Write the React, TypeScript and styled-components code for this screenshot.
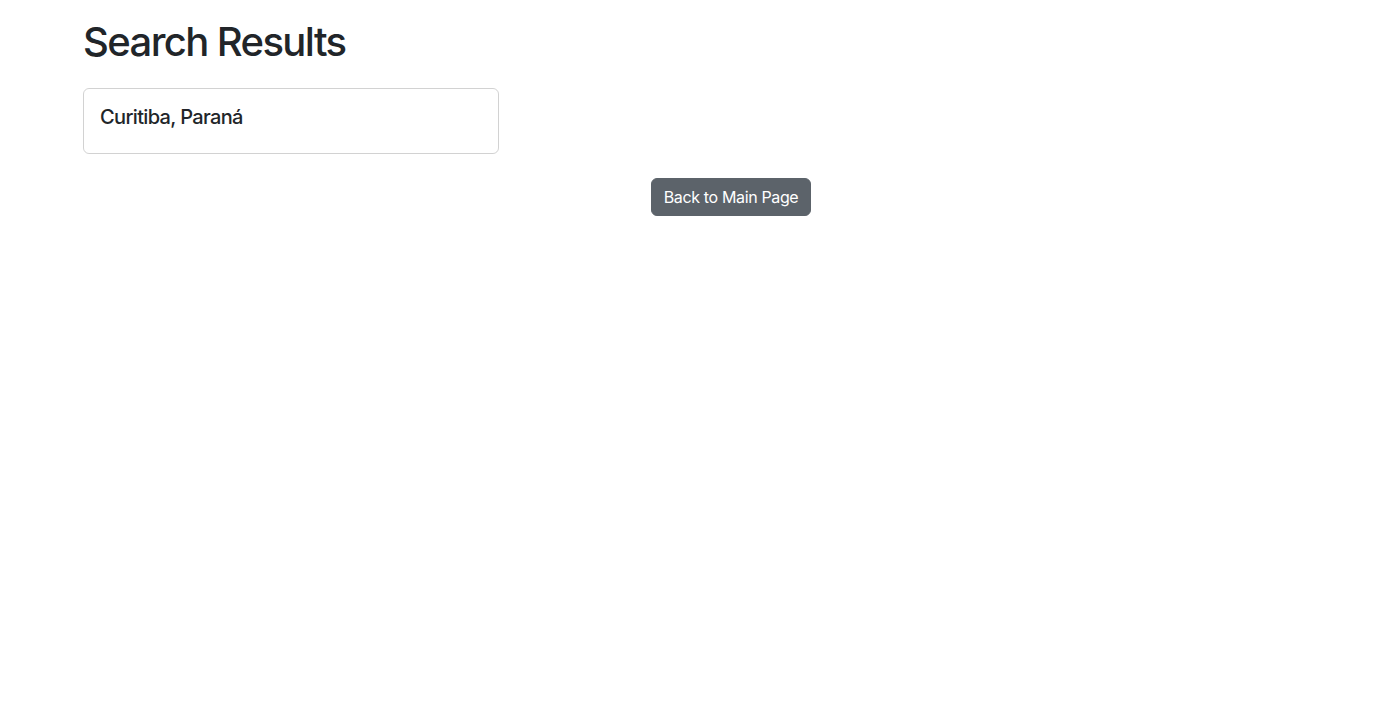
import React from "react";
import styled, { createGlobalStyle } from "styled-components";

const Global = createGlobalStyle`
  html, body { margin: 0; padding: 0; background: #fff; }
  body {
    font-family: Inter, "Noto Sans", "Liberation Sans", sans-serif;
    color: #212529;
    font-size: 16px;
    line-height: 1.5;
  }
`;

const Container = styled.div`
  width: 1296px;
  margin-left: 83px;
  padding-top: 18px;
  display: flex;
  flex-direction: column;
`;

const Title = styled.h1`
  margin: 0 0 22px;
  font-size: 40px;
  font-weight: 500;
  line-height: 1.2;
  letter-spacing: -1.6px;
`;

const Card = styled.div`
  width: 416px;
  box-sizing: border-box;
  border: 1px solid rgba(0, 0, 0, 0.176);
  border-radius: 6px;
  padding: 16px;
`;

const CardTitle = styled.h5`
  margin: 0 0 8px;
  font-size: 20px;
  font-weight: 500;
  line-height: 1.2;
  letter-spacing: -0.65px;
`;

const Actions = styled.div`
  display: flex;
  justify-content: center;
  margin-top: 24px;
`;

const Button = styled.button`
  font-family: inherit;
  font-size: 16px;
  line-height: 24px;
  padding: 6px 12px;
  border: 1px solid #5c636a;
  border-radius: 6px;
  background: #5c636a;
  color: #fff;
  letter-spacing: -0.35px;
  cursor: pointer;
`;

export default function App() {
  return (
    <>
      <Global />
      <Container>
        <Title>Search Results</Title>
        <Card>
          <CardTitle>Curitiba, Paraná</CardTitle>
        </Card>
        <Actions>
          <Button>Back to Main Page</Button>
        </Actions>
      </Container>
    </>
  );
}
